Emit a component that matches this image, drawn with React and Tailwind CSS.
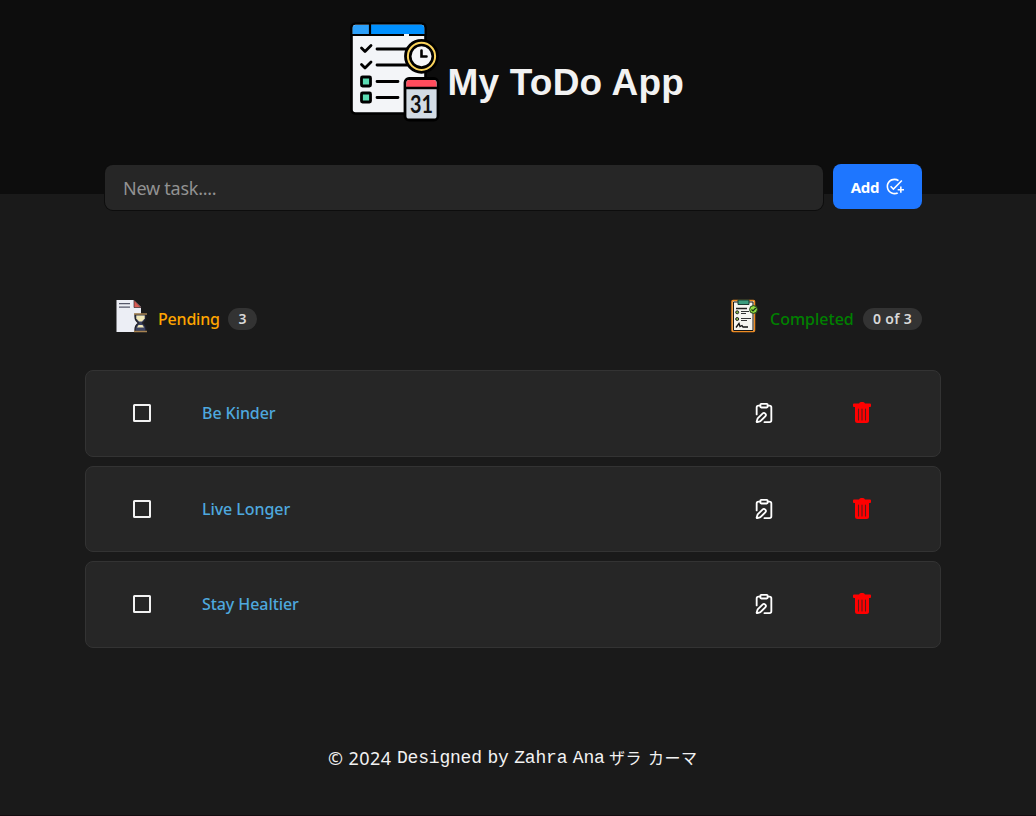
import { ClipboardPen } from 'lucide-react';
import { MdAddTask } from 'react-icons/md';

const tasks = ['Be Kinder', 'Live Longer', 'Stay Healtier'];

function Logo() {
  return (
    <svg width="92" height="100" viewBox="350 22 92 100" className="shrink-0">
      <rect x="351.500" y="23.500" width="74" height="90" rx="4" fill="#f3f5f8" stroke="#000" strokeWidth="2.600" />
      <path d="M352.600 34v-6q0-3 3-3h14v9z" fill="#2ca0fa" />
      <path d="M371 24.800h50q3.300 0 3.300 4v5.200h-53.300z" fill="#0090ff" />
      <path d="M351 35h53M409 35h16M370 24v11" stroke="#000" strokeWidth="2.200" />
      <path d="M361.500 48l3.500 3.500 6-6M361.500 64.500l3.500 3.500 6-6" fill="none" stroke="#000" strokeWidth="2.800" strokeLinecap="round" strokeLinejoin="round" />
      <path d="M377 49h30M377 65h30M377 81.500h21M377 97.500h21" stroke="#000" strokeWidth="2.800" strokeLinecap="round" />
      <rect x="361.500" y="77" width="9" height="9" rx="1" fill="#5bdcb3" stroke="#000" strokeWidth="2.800" />
      <rect x="361.500" y="93" width="9" height="9" rx="1" fill="#5bdcb3" stroke="#000" strokeWidth="2.800" />
      <circle cx="421.500" cy="56.300" r="16" fill="#fbd45c" stroke="#000" strokeWidth="2.800" />
      <circle cx="421.500" cy="56.300" r="11.300" fill="#f5f6f9" stroke="#000" strokeWidth="2.600" />
      <path d="M421.500 50.500v6h5" fill="none" stroke="#000" strokeWidth="2.600" strokeLinecap="round" />
      <rect x="405" y="78.500" width="33" height="41.500" rx="4" fill="#d2dbe4" stroke="#000" strokeWidth="2.800" />
      <path d="M406.400 87v-4q0-3 3-3h24q3 0 3 3v4z" fill="#ff4c5d" />
      <path d="M405 88h33" stroke="#000" strokeWidth="2.500" />
      <text x="421.500" y="112.500" textAnchor="middle" fontFamily="Lato, sans-serif" fontSize="24" fontWeight="700" textLength="23" lengthAdjust="spacingAndGlyphs" fill="#101010">31</text>
    </svg>
  );
}

function PendingIcon() {
  return (
    <svg width="32" height="34" viewBox="115 299 32 34" className="shrink-0">
      <path d="M116.500 300h17.500l7 7v25h-24.500z" fill="#eceef5" />
      <path d="M134 300l7 7.500h-7z" fill="#d95c55" stroke="#33262b" strokeWidth=".7" />
      <path d="M119 303.700h11M119 307.200h11" stroke="#55586a" strokeWidth="1.300" />
      <path d="M135 314.500h11v2q0 4-3.500 6.500 3.500 2.500 3.500 6.500v2h-11v-2q0-4 3.500-6.500-3.500-2.500-3.500-6.500z" fill="#3c4363" stroke="#202026" strokeWidth="1.300" />
      <path d="M136.300 315.500h8.400v3l-2.700 3h-3l-2.700-3z" fill="#f2e9b8" />
      <path d="M138.500 325h4l1.500 2.500h-7z" fill="#f2e9b8" />
      <path d="M134 314h13M134 331.500h13" stroke="#a78351" strokeWidth="1.700" />
    </svg>
  );
}

function CompletedIcon() {
  return (
    <svg width="28" height="34" viewBox="731 299 28 34" className="shrink-0">
      <rect x="732" y="300.500" width="22.500" height="31" rx="1" fill="#f5f4ef" stroke="#ee8b22" strokeWidth="1.500" />
      <path d="M733.500 302v28.500h19.500V302z" fill="none" stroke="#161616" strokeWidth="1" />
      <path d="M738 300h11v4.500h-11z" fill="#3b9c7d" stroke="#193a31" strokeWidth="1" />
      <path d="M736 308.500h11" stroke="#222" strokeWidth="1.500" />
      <circle cx="737.200" cy="312.300" r="1.500" fill="#8ac34a" stroke="#222" strokeWidth="1" />
      <circle cx="737.200" cy="319" r="1.500" fill="#8ac34a" stroke="#222" strokeWidth="1" />
      <path d="M741 311.500h8M741 313.500h5M741 318.500h10M741 320.500h6" stroke="#333" />
      <path d="M736 327.500l3-4 1 3 2-1 1 1.500h5" fill="none" stroke="#111" strokeWidth="1.300" />
      <circle cx="753.500" cy="309.500" r="3.900" fill="#8fdc43" stroke="#1f391c" strokeWidth="1" />
      <path d="M751.500 309.500l1.500 1.500 2.800-3" fill="none" stroke="#143115" strokeWidth="1.200" />
    </svg>
  );
}

function TrashIcon() {
  return (
    <svg width="18" height="21" viewBox="0 0 18 21" fill="#ff0000">
      <path d="M6 1.500Q6.500 0 8 0h2q1.500 0 2 1.500h5q1 0 1 1v1.700q0 .8-1 .8H1q-1 0-1-.8V2.500q0-1 1-1z" />
      <path d="M2 4h14v14.500q0 2.500-2.500 2.500h-9Q2 21 2 18.500z" />
      <path d="M5.500 7v11M9 7v11M12.500 7v11" stroke="#5c1a1a" strokeWidth="1.100" strokeLinecap="round" />
    </svg>
  );
}

function TaskRow({ title }) {
  return (
    <li className="flex h-[86.500px] items-center rounded-lg border border-[#333] bg-[#262626] pr-[69px] pl-[47px]">
      <button aria-label="Complete task" className="shrink-0">
        <svg width="18" height="18" viewBox="0 0 18 18" fill="none">
          <rect x="1" y="1" width="16" height="16" rx="0.500" stroke="#f2f2f2" strokeWidth="2" />
        </svg>
      </button>
      <span className="ml-[51px] grow text-base font-medium tracking-[-0.070px] text-[#4ea8de]">{title}</span>
      <button aria-label="Edit task" className="mr-[78px]">
        <ClipboardPen size={22} color="#fff" strokeWidth={2} />
      </button>
      <button aria-label="Delete task" className="-mt-px">
        <TrashIcon />
      </button>
    </li>
  );
}

export default function App() {
  return (
    <div className="flex h-[816px] flex-col border-b border-[#140c10] bg-[#1a1a1a] font-['Noto_Sans','Noto_Sans_CJK_JP',sans-serif] text-[#f2f2f2]">
      <header className="flex h-[194px] shrink-0 justify-center bg-[#0d0d0d] pt-[22px]">
        <div className="flex h-[100px] items-start">
          <Logo />
          <h1 className="mt-[38px] ml-[6px] w-[239px] font-['Liberation_Sans',sans-serif] text-[37px] leading-[46px] font-bold tracking-[0.200px] whitespace-nowrap">My ToDo App</h1>
        </div>
      </header>
      <main className="flex flex-col">
        <form className="-mt-[30px] ml-[105px] flex w-[817px] items-start gap-[10px]" onSubmit={(e) => e.preventDefault()}>
          <input className="mt-px h-[45px] w-[718px] rounded-lg bg-[#262626] px-[18px] text-lg tracking-[-0.250px] shadow-[0_0_0_1px_#0d0d0d] outline-none placeholder:text-[#929292]" placeholder="New task...." />
          <button className="flex h-[45px] w-[89px] items-center justify-center gap-[6px] rounded-lg bg-[#1e76ff] pt-px text-[15px] font-bold tracking-[-0.300px] text-white">
            Add <MdAddTask size={19} className="-mt-[2px]" />
          </button>
        </form>
        <section className="mt-[89px] ml-[115px] flex w-[807px] items-center justify-between">
          <div className="flex items-center">
            <PendingIcon />
            <span className="mt-[5px] ml-[11px] w-[70px] text-base font-medium tracking-[-0.200px] text-[#ffa500]">Pending</span>
            <span className="mt-[6px] flex h-[22px] w-[29px] items-center justify-center rounded-full bg-[#333] text-sm font-semibold text-[#d9d9d9]">3</span>
          </div>
          <div className="flex items-center">
            <CompletedIcon />
            <span className="mt-[5px] ml-[11px] w-[93px] text-base font-medium text-[#008000]">Completed</span>
            <span className="mt-[6px] flex h-[22px] w-[59px] items-center justify-center rounded-full bg-[#333] text-sm font-semibold tracking-[0.300px] text-[#d9d9d9]">0 of 3</span>
          </div>
        </section>
        <ul className="mt-[37px] ml-[85px] flex w-[856px] flex-col gap-[9px]">
          {tasks.map((title) => <TaskRow key={title} title={title} />)}
        </ul>
      </main>
      <footer className="mt-[96px] ml-[328px] flex h-[28px] items-center whitespace-nowrap">
        <span className="w-[69px] text-lg tracking-[0.450px]">© 2024</span>
        <span className="mt-px w-[212px] font-['Liberation_Mono',monospace] text-lg tracking-[-0.200px] [word-spacing:-5px]">Designed by Zahra Ana</span>
        <span className="-mt-[2px] w-[92px] font-['Noto_Sans_CJK_JP',sans-serif] text-base tracking-[0.500px] [word-spacing:2px]">ザラ カーマ</span>
      </footer>
    </div>
  );
}
